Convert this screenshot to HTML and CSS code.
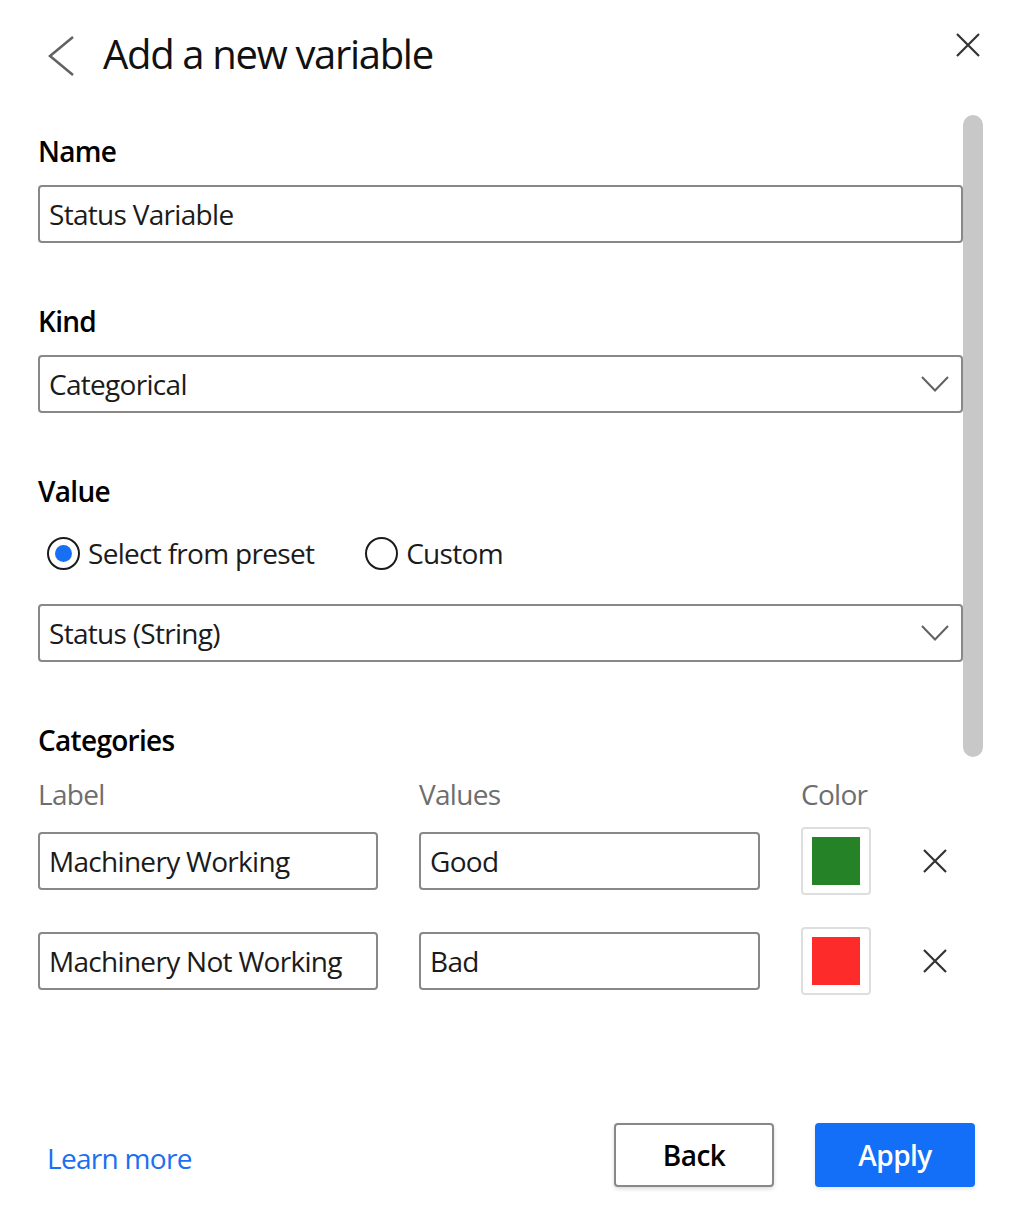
FILE: index.html
```html
<!DOCTYPE html>
<html lang="en">
<head>
<meta charset="utf-8">
<title>Add a new variable</title>
<link rel="stylesheet" href="styles.css">
</head>
<body>
<div class="panel">
  <header class="head">
    <button class="icon-btn back" aria-label="Back">
      <svg width="26" height="42" viewBox="0 0 26 42"><polyline points="25,2 2,21 25,40" fill="none" stroke="#616161" stroke-width="2.5"/></svg>
    </button>
    <h1 class="title">Add a new variable</h1>
    <button class="icon-btn close" aria-label="Close">
      <svg width="24" height="24" viewBox="0 0 24 24"><path d="M1 1 L23 23 M23 1 L1 23" stroke="#333" stroke-width="2.2" fill="none"/></svg>
    </button>
  </header>

  <div class="main">
    <div class="content">
      <div class="label">Name</div>
      <div class="field">Status Variable</div>

      <div class="label gap">Kind</div>
      <div class="field select">
        <span>Categorical</span>
        <svg class="chev" width="28" height="16" viewBox="0 0 28 16"><polyline points="1,1 14,14.5 27,1" fill="none" stroke="#616161" stroke-width="2"/></svg>
      </div>

      <div class="label gap">Value</div>
      <div class="radios">
        <div class="radio on"><span class="dot"></span><span>Select from preset</span></div>
        <div class="radio"><span class="dot"></span><span>Custom</span></div>
      </div>
      <div class="field select preset">
        <span>Status (String)</span>
        <svg class="chev" width="28" height="16" viewBox="0 0 28 16"><polyline points="1,1 14,14.5 27,1" fill="none" stroke="#616161" stroke-width="2"/></svg>
      </div>

      <div class="label gap">Categories</div>
      <div class="cat-row cat-head">
        <span>Label</span>
        <span>Values</span>
        <span>Color</span>
      </div>
      <div class="cat-row item">
        <div class="field">Machinery Working</div>
        <div class="field">Good</div>
        <div class="swatch-box"><span class="swatch green"></span></div>
        <svg class="remove" width="24" height="24" viewBox="0 0 24 24"><path d="M1 1 L23 23 M23 1 L1 23" stroke="#333" stroke-width="2.2" fill="none"/></svg>
      </div>
      <div class="cat-row item">
        <div class="field">Machinery Not Working</div>
        <div class="field">Bad</div>
        <div class="swatch-box"><span class="swatch red"></span></div>
        <svg class="remove" width="24" height="24" viewBox="0 0 24 24"><path d="M1 1 L23 23 M23 1 L1 23" stroke="#333" stroke-width="2.2" fill="none"/></svg>
      </div>
    </div>
    <div class="track"><div class="thumb"></div></div>
  </div>

  <footer class="foot">
    <a class="link" href="#">Learn more</a>
    <div class="actions">
      <button class="btn secondary">Back</button>
      <button class="btn primary">Apply</button>
    </div>
  </footer>
</div>
</body>
</html>
```

FILE: styles.css
```css
* { box-sizing: border-box; }
html, body { margin: 0; padding: 0; background: #fff; }
body {
  font-family: "Open Sans", "Noto Sans", sans-serif;
  color: #1b1b1b;
  font-size: 28px;
  letter-spacing: -0.025em;
}
.panel {
  width: 1018px;
  height: 1230px;
  display: flex;
  flex-direction: column;
}
.head {
  display: flex;
  align-items: flex-start;
  padding-top: 28px;
  height: 80px;
}
.icon-btn {
  border: 0;
  background: none;
  padding: 0;
  display: block;
  line-height: 0;
}
.back { margin: 7px 0 0 48px; }
.title {
  margin: 0 0 0 29px;
  font-size: 40px;
  font-weight: 400;
  line-height: 52px;
  letter-spacing: -0.033em;
  color: #111;
}
.close { margin: 5px 38px 0 auto; }

.main {
  display: flex;
  align-items: flex-start;
  margin-top: 35px;
}
.content {
  margin-left: 38px;
  width: 925px;
  padding-top: 18px;
}
.track { width: 20px; }
.thumb {
  height: 642px;
  background: #c8c8c8;
  border-radius: 10px;
}
.label {
  font-weight: 600;
  line-height: 36px;
  height: 36px;
  margin-bottom: 16px;
  color: #000;
}
.label.gap { margin-top: 60px; }
.field {
  height: 58px;
  border: 2px solid #8a8886;
  border-radius: 4px;
  padding: 0 9px;
  display: flex;
  align-items: center;
  line-height: 36px;
  white-space: nowrap;
}
.select { justify-content: space-between; padding-right: 12px; }
.radios {
  display: flex;
  align-items: center;
  height: 36px;
  margin-top: 26px;
  padding-left: 9px;
  gap: 51px;
}
.radio { display: flex; align-items: center; gap: 8px; }
.dot {
  width: 33px;
  height: 33px;
  border: 2px solid #1b1b1b;
  border-radius: 50%;
  display: flex;
  align-items: center;
  justify-content: center;
}
.radio.on .dot::after {
  content: "";
  width: 17px;
  height: 17px;
  border-radius: 50%;
  background: #1570f6;
}
.preset { margin-top: 33px; }
.cat-row {
  display: grid;
  grid-template-columns: 340px 341px 70px 24px;
  column-gap: 41px;
  align-items: center;
}
.cat-head {
  color: #6e6e6e;
  line-height: 36px;
  margin-top: 18px;
}
.item { height: 68px; margin-top: 15px; }
.item + .item { margin-top: 32px; }
.swatch-box {
  width: 70px;
  height: 68px;
  border: 2px solid #dedede;
  border-radius: 4px;
  display: flex;
  align-items: center;
  justify-content: center;
}
.swatch { width: 48px; height: 48px; display: block; }
.green { background: #268226; }
.red { background: #fe2b2b; }
.remove { margin-left: 11px; }

.foot {
  margin-top: auto;
  display: flex;
  align-items: center;
  padding: 0 43px 43px 47px;
}
.link {
  color: #1a6ff2;
  text-decoration: none;
  margin-top: 6px;
}
.actions { margin-left: auto; display: flex; gap: 41px; }
.btn {
  width: 160px;
  height: 64px;
  border-radius: 4px;
  font-family: inherit;
  font-size: 28px;
  font-weight: 600;
  letter-spacing: -0.02em;
  padding: 0;
}
.secondary {
  background: #fff;
  border: 2px solid #8a8886;
  color: #000;
  box-shadow: 0 2px 4px rgba(0,0,0,0.14);
}
.primary {
  background: #136ef8;
  border: 0;
  color: #fff;
  box-shadow: 0 2px 4px rgba(0,0,0,0.1);
}
```
